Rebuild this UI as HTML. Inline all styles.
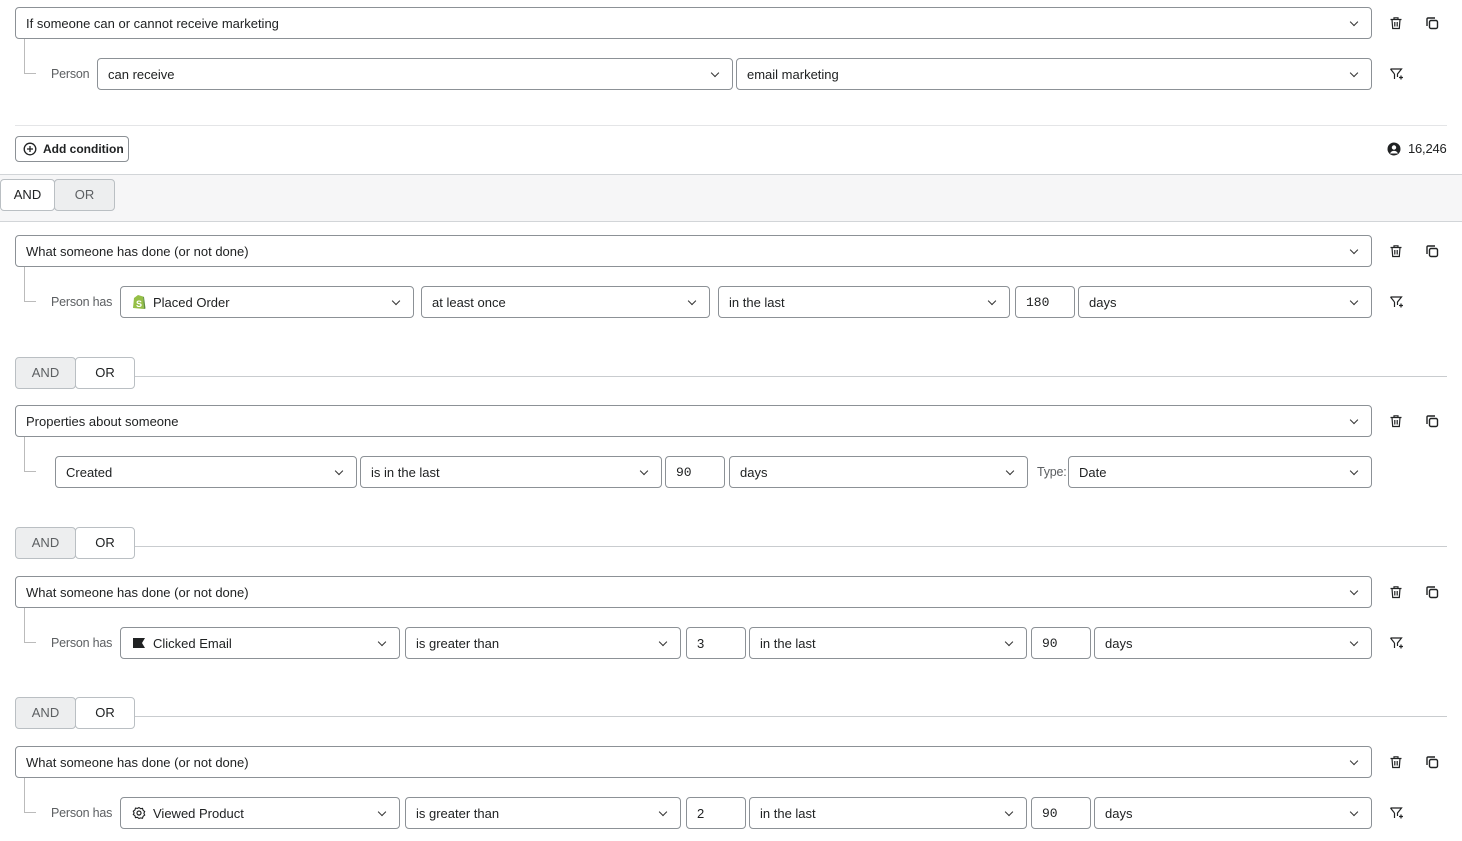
<!DOCTYPE html>
<html><head><meta charset="utf-8"><style>
*{box-sizing:border-box;margin:0;padding:0}
body{width:1462px;height:841px;position:relative;background:#fff;font-family:"Liberation Sans",sans-serif;font-size:13px;color:#202223;overflow:hidden}
.b{position:absolute;height:32px;border:1px solid #8c9196;border-radius:4px;background:#fff;padding-left:10px;line-height:32px;white-space:nowrap}
.b.c::after{content:"";position:absolute;right:14px;top:11px;width:5px;height:5px;border-right:1.3px solid #333;border-bottom:1.3px solid #333;transform:rotate(45deg)}
.m{font-family:"Liberation Mono",monospace}
.l{position:absolute;color:#5c5f62;font-size:12.5px;letter-spacing:-0.2px}
.t{position:absolute;left:24px;width:12px;border-left:1px solid #bbb;border-bottom:1px solid #bbb}
.ic{position:absolute}
.ao{position:absolute;height:32px;border:1px solid #babfc3;border-radius:4px;line-height:30px;text-align:center;color:#202223}
.g{background:#edeeef;color:#5c5f62}
.hl{position:absolute;height:1px;background:#c9cccf}
</style></head><body>

<svg width="0" height="0" style="position:absolute"><defs>
<g id="tr" fill="none" stroke="#202223" stroke-width="1.2"><path d="M1.5 3.5h11M5 3.5V1.8h4v1.7M3 3.5l.7 9h6.6l.7-9M5.8 6v4.5M8.2 6v4.5"/></g>
<g id="cp" fill="none" stroke="#202223" stroke-width="1.4"><rect x="4.5" y="4.5" width="8" height="8" rx="1.5"/><path d="M2 10V3a1 1 0 0 1 1-1h7"/></g>
<g id="fl" fill="none" stroke="#202223" stroke-width="1.2"><path d="M1.5 2h11l-4 5v3M5.5 7L1.5 2M5.5 7v5"/><path d="M10 10.5h4M12 8.5v4"/></g>
</defs></svg>

<!-- block 1 -->
<div class="b c" style="left:15px;top:7px;width:1357px">If someone can or cannot receive marketing</div>
<div class="t" style="top:39px;height:35px"></div>
<div class="l" style="left:51px;top:67px">Person</div>
<div class="b c" style="left:97px;top:58px;width:636px">can receive</div>
<div class="b c" style="left:736px;top:58px;width:636px">email marketing</div>
<svg class="ic" style="left:1389px;top:16px" width="14" height="14"><use href="#tr"/></svg>
<svg class="ic" style="left:1425px;top:16px" width="14" height="14"><use href="#cp"/></svg>
<svg class="ic" style="left:1389px;top:67px" width="15" height="14"><use href="#fl"/></svg>
<div class="hl" style="left:15px;top:125px;width:1432px;background:#e4e5e7"></div>
<div style="position:absolute;left:15px;top:136px;width:114px;height:26px;border:1px solid #8c9196;border-radius:4px;font-size:12px;font-weight:bold;line-height:24px;padding-left:27px">Add condition</div>
<svg class="ic" style="left:23px;top:142px" width="14" height="14"><circle cx="7" cy="7" r="5.8" fill="none" stroke="#202223" stroke-width="1.3"/><path d="M7 4v6M4 7h6" stroke="#202223" stroke-width="1.3"/></svg>
<svg class="ic" style="left:1387px;top:142px" width="14" height="14"><circle cx="7" cy="7" r="6.5" fill="#202223"/><circle cx="7" cy="5.5" r="2.2" fill="#fff"/><path d="M3 11.5c1-2 2.5-2.6 4-2.6s3 .6 4 2.6" fill="#fff"/></svg>
<div class="l" style="left:1408px;top:141px;color:#202223;font-size:13px">16,246</div>

<div style="position:absolute;left:0;top:174px;width:1462px;height:48px;background:#f6f6f7;border-top:1px solid #d2d5d8;border-bottom:1px solid #d2d5d8"></div>
<div class="ao g" style="left:54px;top:179px;width:61px">OR</div>
<div class="ao" style="left:0;top:179px;width:55px;background:#fff">AND</div>

<!-- block 2 -->
<div class="b c" style="left:15px;top:235px;width:1357px">What someone has done (or not done)</div>
<div class="t" style="top:267px;height:35px"></div>
<div class="l" style="left:51px;top:295px">Person has</div>
<div class="b c" style="left:120px;top:286px;width:294px;padding-left:32px">Placed Order</div>
<svg class="ic" style="left:132px;top:294px" width="14" height="16"><path d="M2 4l4-3 5 1.5 1 12.5-11-1z" fill="#95bf47"/><path d="M11 2.5l1 12.5 1.5-.5L12 3z" fill="#5e8e3e"/><text x="4" y="13" font-size="9" font-weight="bold" fill="#fff" font-family="Liberation Sans">S</text></svg>
<div class="b c" style="left:421px;top:286px;width:289px">at least once</div>
<div class="b c" style="left:718px;top:286px;width:292px">in the last</div>
<div class="b m" style="left:1015px;top:286px;width:60px">180</div>
<div class="b c" style="left:1078px;top:286px;width:294px">days</div>
<svg class="ic" style="left:1389px;top:244px" width="14" height="14"><use href="#tr"/></svg>
<svg class="ic" style="left:1425px;top:244px" width="14" height="14"><use href="#cp"/></svg>
<svg class="ic" style="left:1389px;top:295px" width="15" height="14"><use href="#fl"/></svg>

<div class="hl" style="left:135px;top:376px;width:1312px"></div>
<div class="ao g" style="left:15px;top:357px;width:61px">AND</div>
<div class="ao" style="left:75px;top:357px;width:60px;background:#fff">OR</div>

<!-- block 3 -->
<div class="b c" style="left:15px;top:405px;width:1357px">Properties about someone</div>
<div class="t" style="top:437px;height:35px"></div>
<div class="b c" style="left:55px;top:456px;width:302px">Created</div>
<div class="b c" style="left:360px;top:456px;width:302px">is in the last</div>
<div class="b m" style="left:665px;top:456px;width:60px">90</div>
<div class="b c" style="left:729px;top:456px;width:299px">days</div>
<div class="l" style="left:1037px;top:465px">Type:</div>
<div class="b c" style="left:1068px;top:456px;width:304px">Date</div>
<svg class="ic" style="left:1389px;top:414px" width="14" height="14"><use href="#tr"/></svg>
<svg class="ic" style="left:1425px;top:414px" width="14" height="14"><use href="#cp"/></svg>

<div class="hl" style="left:135px;top:546px;width:1312px"></div>
<div class="ao g" style="left:15px;top:527px;width:61px">AND</div>
<div class="ao" style="left:75px;top:527px;width:60px;background:#fff">OR</div>

<!-- block 4 -->
<div class="b c" style="left:15px;top:576px;width:1357px">What someone has done (or not done)</div>
<div class="t" style="top:608px;height:35px"></div>
<div class="l" style="left:51px;top:636px">Person has</div>
<div class="b c" style="left:120px;top:627px;width:280px;padding-left:32px">Clicked Email</div>
<svg class="ic" style="left:132px;top:637px" width="14" height="12"><path d="M1 1h12l-3 5 3 5H1z" fill="#202223"/></svg>
<div class="b c" style="left:405px;top:627px;width:276px">is greater than</div>
<div class="b" style="left:686px;top:627px;width:60px">3</div>
<div class="b c" style="left:749px;top:627px;width:278px">in the last</div>
<div class="b m" style="left:1031px;top:627px;width:60px">90</div>
<div class="b c" style="left:1094px;top:627px;width:278px">days</div>
<svg class="ic" style="left:1389px;top:585px" width="14" height="14"><use href="#tr"/></svg>
<svg class="ic" style="left:1425px;top:585px" width="14" height="14"><use href="#cp"/></svg>
<svg class="ic" style="left:1389px;top:636px" width="15" height="14"><use href="#fl"/></svg>

<div class="hl" style="left:135px;top:716px;width:1312px"></div>
<div class="ao g" style="left:15px;top:697px;width:61px">AND</div>
<div class="ao" style="left:75px;top:697px;width:60px;background:#fff">OR</div>

<!-- block 5 -->
<div class="b c" style="left:15px;top:746px;width:1357px">What someone has done (or not done)</div>
<div class="t" style="top:778px;height:35px"></div>
<div class="l" style="left:51px;top:806px">Person has</div>
<div class="b c" style="left:120px;top:797px;width:280px;padding-left:32px">Viewed Product</div>
<svg class="ic" style="left:132px;top:806px" width="14" height="14"><circle cx="7" cy="7" r="2" fill="none" stroke="#202223" stroke-width="1.2"/><path d="M7 1.5l1.5 1.2 2 -.3.6 1.9 1.6 1.2-.8 1.8.8 1.8-1.6 1.2-.6 1.9-2-.3L7 12.5l-1.5-1.2-2 .3-.6-1.9L1.3 8.5 2.1 7 1.3 5.2l1.6-1.2.6-1.9 2 .3z" fill="none" stroke="#202223" stroke-width="1.1"/></svg>
<div class="b c" style="left:405px;top:797px;width:276px">is greater than</div>
<div class="b" style="left:686px;top:797px;width:60px">2</div>
<div class="b c" style="left:749px;top:797px;width:278px">in the last</div>
<div class="b m" style="left:1031px;top:797px;width:60px">90</div>
<div class="b c" style="left:1094px;top:797px;width:278px">days</div>
<svg class="ic" style="left:1389px;top:755px" width="14" height="14"><use href="#tr"/></svg>
<svg class="ic" style="left:1425px;top:755px" width="14" height="14"><use href="#cp"/></svg>
<svg class="ic" style="left:1389px;top:806px" width="15" height="14"><use href="#fl"/></svg>

</body></html>
